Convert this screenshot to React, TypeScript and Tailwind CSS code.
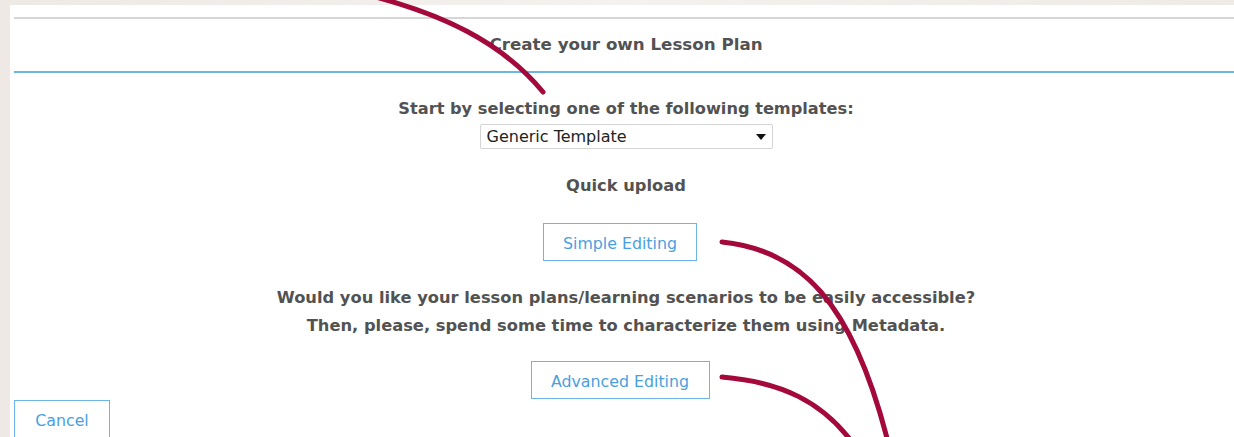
import React from "react";

const font = { fontFamily: '"DejaVu Sans", Verdana, sans-serif' };

function Annotations() {
  return (
    <svg
      className="pointer-events-none absolute left-0 top-0"
      width="1234"
      height="437"
      viewBox="0 0 1234 437"
      fill="none"
    >
      <path d="M372 -4 C440 14, 500 40, 543 92" stroke="#a3093a" strokeWidth="5" strokeLinecap="round" />
      <path d="M722 242 C800 250, 852 300, 888 442" stroke="#a3093a" strokeWidth="5" strokeLinecap="round" />
      <path d="M722 377 C782 382, 822 402, 852 442" stroke="#a3093a" strokeWidth="5" strokeLinecap="round" />
    </svg>
  );
}

function OutlineButton({ label, className }: { label: string; className: string }) {
  return (
    <button
      className={`border border-[#6db4e8] bg-white pt-[3px] text-[15.8px] text-[#4a9fe0] ${className}`}
      style={font}
    >
      {label}
    </button>
  );
}

export default function App() {
  return (
    <div
      className="relative h-[437px] w-[1234px] overflow-hidden bg-gradient-to-r from-[#efe9e5] via-[#f4f1ee] to-[#efeae6] pl-[10px] pt-[5px]"
      style={font}
    >
      <div className="h-full bg-white pl-[4px] pt-[12px]">
        <div className="h-[2px] bg-[#d6d6d6]" />
        <div className="flex h-[52px] items-center justify-center pl-[4px] text-[16.7px] font-bold text-[#525252]">
          Create your own Lesson Plan
        </div>
        <div className="h-[2px] bg-[#6db4e8]" />

        <div className="flex flex-col items-center pl-[4px]">
          <div className="mt-[26px] text-[16.2px] font-bold leading-[20px] text-[#525252]">
            Start by selecting one of the following templates:
          </div>
          <div className="mt-[5px] flex h-[25px] w-[293px] items-center justify-between rounded-[2px] border border-[#d4d4d4] bg-white pl-[6px] pr-[6px] text-[16px] text-[#222]">
            <span>Generic Template</span>
            <svg width="10" height="6" viewBox="0 0 10 6">
              <path d="M0 0 L10 0 L5 6 Z" fill="#111" />
            </svg>
          </div>
          <div className="mt-[27px] text-[16.3px] font-bold leading-[20px] text-[#525252]">
            Quick upload
          </div>
          <OutlineButton label="Simple Editing" className="mr-[12px] mt-[27px] h-[38px] w-[154px]" />
          <div className="mt-[23px] text-center text-[16.3px] font-bold leading-[28px] text-[#525252]">
            <div>Would you like your lesson plans/learning scenarios to be easily accessible?</div>
            <div>Then, please, spend some time to characterize them using Metadata.</div>
          </div>
          <OutlineButton label="Advanced Editing" className="mr-[12px] mt-[21px] h-[38px] w-[179px]" />
        </div>
        <OutlineButton label="Cancel" className="mt-[1px] h-[38px] w-[96px]" />
      </div>
      <Annotations />
    </div>
  );
}
